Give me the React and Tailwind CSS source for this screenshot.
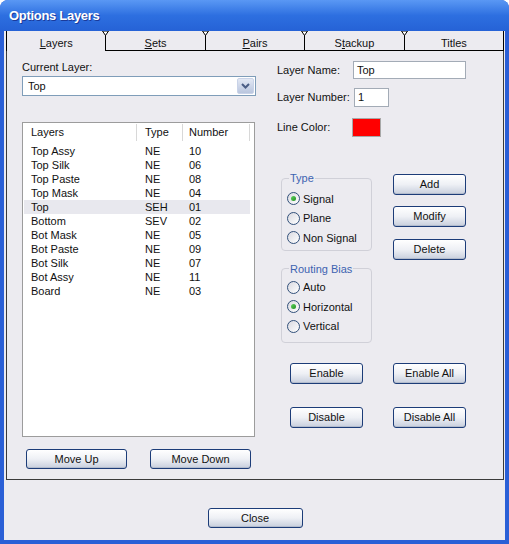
import React from "react";

const layers = [
  ["Top Assy", "NE", "10"],
  ["Top Silk", "NE", "06"],
  ["Top Paste", "NE", "08"],
  ["Top Mask", "NE", "04"],
  ["Top", "SEH", "01"],
  ["Bottom", "SEV", "02"],
  ["Bot Mask", "NE", "05"],
  ["Bot Paste", "NE", "09"],
  ["Bot Silk", "NE", "07"],
  ["Bot Assy", "NE", "11"],
  ["Board", "NE", "03"],
];

function XpButton({ children, className = "" }) {
  return (
    <button
      className={
        "flex items-center justify-center rounded-[3px] border border-[#1c3c78] bg-gradient-to-b from-[#ffffff] via-[#eef0f5] to-[#c8cfdd] text-[11px] text-[#111] leading-none shadow-[inset_0_-1px_0_#b3bccd] " +
        className
      }
    >
      {children}
    </button>
  );
}

function Radio({ label, checked }) {
  return (
    <div className="flex items-center gap-[3px] h-[19.5px] pl-[5px]">
      <span className="w-[13px] h-[13px] rounded-full border border-[#32507a] bg-gradient-to-br from-[#d9d9e0] to-white flex items-center justify-center">
        {checked && (
          <span className="w-[5px] h-[5px] rounded-full bg-gradient-to-br from-[#5fd35f] to-[#1e8f1e]" />
        )}
      </span>
      <span>{label}</span>
    </div>
  );
}

function Tab({ children, selected, last }) {
  return (
    <div
      className={
        "relative flex-1 flex justify-center pt-[4px] text-[11px] " +
        (last ? "" : "border-r border-black ") +
        (selected ? "" : "border-b border-black")
      }
    >
      {children}
      {!last && (
        <svg
          className="absolute right-[-4px] top-0"
          width="7"
          height="5"
          viewBox="0 0 7 5"
        >
          <polygon points="0.5,0 6.5,0 3.5,4.5" fill="#fff" stroke="#000" strokeWidth="1" />
        </svg>
      )}
    </div>
  );
}

export default function App() {
  return (
    <div className="w-[509px] h-[544px] bg-[#2a5fd6] rounded-t-[8px] overflow-hidden flex flex-col font-['Liberation_Sans',Arial,sans-serif] text-[#111]">
      {/* title bar */}
      <div className="h-[31px] shrink-0 bg-gradient-to-b from-[#5a98f4] via-[#2d6fe0] to-[#2562d6] flex items-center pl-[9px] pt-[1px]">
        <span className="text-white font-bold text-[13px] tracking-[-0.3px] [text-shadow:1px_1px_0_#1a3a9a]">
          Options Layers
        </span>
      </div>

      <div className="flex-1 mx-[4px] mb-[4px] bg-[#ecebf0] flex flex-col">
        {/* tabs */}
        <div className="h-[20px] shrink-0 ml-[2px] mr-[1px] flex border-l border-r border-black">
          <Tab selected>
            <span>
              <u>L</u>ayers
            </span>
          </Tab>
          <Tab>
            <span>
              <u>S</u>ets
            </span>
          </Tab>
          <Tab>
            <span>
              <u>P</u>airs
            </span>
          </Tab>
          <Tab>
            <span>
              S<u>t</u>ackup
            </span>
          </Tab>
          <Tab last>
            <span>Titles</span>
          </Tab>
        </div>

        {/* tab panel */}
        <div className="h-[429px] shrink-0 ml-[2px] mr-[1px] border-l border-r border-b border-[#3a3a3a] flex text-[11px]">
          {/* left column */}
          <div className="ml-[15px] w-[234px] pt-[9px] flex flex-col">
            <div className="h-[14px] leading-[14px]">Current Layer:</div>
            <div className="mt-[2px] h-[20px] border border-[#7f9db9] bg-white p-[1px] flex">
              <div className="flex-1 pl-[4px] flex items-center">Top</div>
              <div className="w-[17px] rounded-[2px] bg-gradient-to-b from-[#e3e8f4] to-[#b9c5de] border border-[#c9d3e8] flex items-center justify-center">
                <svg width="9" height="6" viewBox="0 0 9 6">
                  <path d="M1 1 L4.5 4.5 L8 1" fill="none" stroke="#4a5d85" strokeWidth="2" />
                </svg>
              </div>
            </div>

            <div className="mt-[26px] w-[233px] h-[315px] border border-[#9c9c9c] bg-white pt-[1px] pl-[1px]">
              <div className="flex h-[17px] w-[226px] items-center">
                <div className="w-[113px] pl-[7px] h-full flex items-center border-r border-[#d8d8d8]">Layers</div>
                <div className="w-[46px] pl-[8px] h-full flex items-center border-r border-[#d8d8d8]">Type</div>
                <div className="w-[67px] pl-[6px] h-full flex items-center border-r border-[#d8d8d8]">Number</div>
              </div>
              <div className="mt-[3px]">
                {layers.map(([name, type, num]) => (
                  <div
                    key={name}
                    className={
                      "flex h-[14px] w-[226px] items-center " +
                      (name === "Top" ? "bg-[#e8e8ee]" : "")
                    }
                  >
                    <div className="w-[113px] pl-[7px]">{name}</div>
                    <div className="w-[46px] pl-[8px]">{type}</div>
                    <div className="w-[67px] pl-[6px]">{num}</div>
                  </div>
                ))}
              </div>
            </div>

            <div className="mt-[12px] ml-[4px] flex gap-[23px]">
              <XpButton className="w-[101px] h-[20px]">Move Up</XpButton>
              <XpButton className="w-[101px] h-[20px]">Move Down</XpButton>
            </div>
          </div>

          {/* right column */}
          <div className="ml-[21px] pt-[10px] flex flex-col">
            <div className="flex items-center h-[18px]">
              <div className="w-[76px]">Layer Name:</div>
              <div className="w-[113px] h-[18px] border border-[#a3abb6] bg-white pl-[3px] flex items-center">
                Top
              </div>
            </div>
            <div className="mt-[9px] flex items-center h-[19px]">
              <div className="w-[77px]">Layer Number:</div>
              <div className="w-[35px] h-[19px] border border-[#a3abb6] bg-white pl-[3px] flex items-center">
                1
              </div>
            </div>
            <div className="mt-[11px] flex items-center h-[19px]">
              <div className="w-[75px]">Line Color:</div>
              <div className="w-[29px] h-[19px] border border-[#a8a8a8] bg-[#ff0000]" />
            </div>

            <div className="mt-[34px] flex">
              <div className="ml-[4px] w-[91px] flex flex-col">
                <fieldset className="border border-[#d0d0d8] rounded-[4px] pt-[4px] pb-[2px]">
                  <legend className="ml-[7px] px-[1px] leading-[14px] text-[#3d63b0]">Type</legend>
                  <Radio label="Signal" checked />
                  <Radio label="Plane" />
                  <Radio label="Non Signal" />
                </fieldset>
                <fieldset className="mt-[11px] border border-[#d0d0d8] rounded-[4px] pt-[2px] pb-[6px]">
                  <legend className="ml-[7px] px-[1px] leading-[14px] text-[#3d63b0]">Routing Bias</legend>
                  <Radio label="Auto" />
                  <Radio label="Horizontal" checked />
                  <Radio label="Vertical" />
                </fieldset>
              </div>
              <div className="ml-[21px] pt-[3px] flex flex-col">
                <XpButton className="w-[73px] h-[21px]">Add</XpButton>
                <XpButton className="mt-[11px] w-[73px] h-[21px]">Modify</XpButton>
                <XpButton className="mt-[12px] w-[73px] h-[21px]">Delete</XpButton>
              </div>
            </div>

            <div className="mt-[20px] ml-[13px] flex gap-[30px]">
              <XpButton className="w-[73px] h-[21px]">Enable</XpButton>
              <XpButton className="w-[73px] h-[21px]">Enable All</XpButton>
            </div>
            <div className="mt-[23px] ml-[13px] flex gap-[30px]">
              <XpButton className="w-[73px] h-[21px]">Disable</XpButton>
              <XpButton className="w-[73px] h-[21px]">Disable All</XpButton>
            </div>
          </div>
        </div>

        <div className="mt-[28px] flex justify-center">
          <XpButton className="w-[95px] h-[20px] ml-[1px]">Close</XpButton>
        </div>
      </div>
    </div>
  );
}
